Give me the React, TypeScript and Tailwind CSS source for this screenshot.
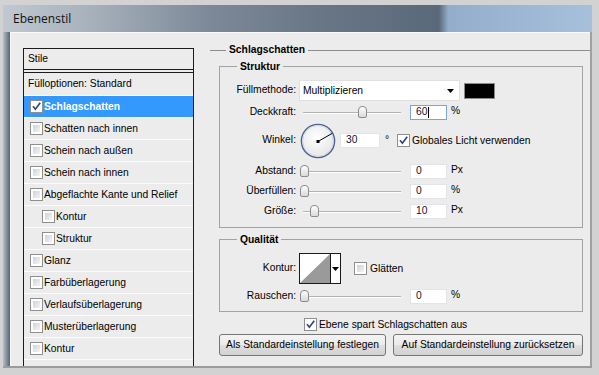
import React from "react";

const FONT = "font-['Liberation_Sans',Arial,sans-serif]";

function Check({ checked = false }: { checked?: boolean }) {
  if (checked) {
    return (
      <div className="w-[13px] h-[13px] shrink-0 border border-[#8e8f8f] bg-white flex items-center justify-center">
        <svg width="11" height="11" viewBox="0 0 11 11" className="block">
          <path d="M2 5.2 L4.4 8.2 L9.2 1.8" stroke="#33447e" strokeWidth="1.7" fill="none" />
        </svg>
      </div>
    );
  }
  return (
    <div className="w-[13px] h-[13px] shrink-0 border border-[#8e8f8f] bg-white p-[2px]">
      <div className="w-full h-full bg-[linear-gradient(135deg,#cfd2d7,#f3f4f5)]" />
    </div>
  );
}

function Slider({ thumb }: { thumb: string }) {
  return (
    <div className="relative w-[101px] h-[15px] shrink-0">
      <div className="absolute left-[3px] right-0 top-[7px] h-[2px] border-t border-[#b3b3b3] bg-white" />
      <div className={`absolute top-[1px] w-[9px] h-[12px] rounded-t-[4px] rounded-b-[2px] border border-[#8c8c8c] bg-[linear-gradient(#ffffff,#d9d9d9)] ${thumb}`} />
    </div>
  );
}

function NumInput({ value, focus = false, w = "w-[37px]" }: { value: string; focus?: boolean; w?: string }) {
  return (
    <div
      className={`${w} h-[15px] shrink-0 bg-white border ${
        focus ? "border-[#7aa7d8]" : "border-[#e3e4e8]"
      } flex items-center pl-[5px] text-[#14142e] leading-none`}
    >
      {value}
      {focus && <span className="w-px h-[11px] bg-black ml-[1px]" />}
    </div>
  );
}

function Label({ children }: { children: React.ReactNode }) {
  return <div className="w-[76px] shrink-0 text-right leading-none">{children}</div>;
}

function SliderRow({
  label,
  thumb,
  value,
  unit,
  mt,
  focus = false,
}: {
  label: string;
  thumb: string;
  value: string;
  unit: string;
  mt: string;
  focus?: boolean;
}) {
  return (
    <div className={`flex items-center h-[15px] ${mt}`}>
      <Label>{label}</Label>
      <div className="ml-[4px]">
        <Slider thumb={thumb} />
      </div>
      <div className="ml-[9px]">
        <NumInput value={value} focus={focus} />
      </div>
      <div className="ml-[4px] self-start mt-[1px] leading-none">{unit}</div>
    </div>
  );
}

function ListRow({
  text,
  box = true,
  indent = false,
  selected = false,
  first = false,
}: {
  text: string;
  box?: boolean;
  indent?: boolean;
  selected?: boolean;
  first?: boolean;
}) {
  return (
    <div className={`h-[22px] shrink-0 flex flex-col ${first ? "" : "border-t border-[#fbfbfb]"}`}>
      <div
        className={`flex-1 flex items-center ${selected ? "bg-[#3399ff] text-white font-bold" : ""} ${
          box ? (indent ? "pl-[18px]" : "pl-[6px]") : "pl-[4px]"
        }`}
      >
        {box && <Check checked={selected} />}
        <span className={box ? "ml-[1px]" : ""}>{text}</span>
      </div>
    </div>
  );
}

function Dial() {
  return (
    <svg width="36" height="36" viewBox="0 0 36 36" className="block shrink-0">
      <defs>
        <radialGradient id="dialg" cx="45%" cy="40%" r="65%">
          <stop offset="0%" stopColor="#ffffff" />
          <stop offset="100%" stopColor="#e4e4e4" />
        </radialGradient>
      </defs>
      <circle cx="18" cy="18" r="16.6" fill="url(#dialg)" stroke="#4f6190" strokeWidth="1.4" />
      <circle cx="18" cy="18" r="15.4" fill="none" stroke="#c9d0de" strokeWidth="0.8" />
      <line x1="18" y1="18.5" x2="32.3" y2="10.3" stroke="#000" strokeWidth="1" />
      <rect x="16.5" y="17" width="3" height="3" fill="#000" />
    </svg>
  );
}

function ContourPreview() {
  return (
    <div className="flex h-[31px] shrink-0 border border-[#1a1a1a] bg-white">
      <svg width="30" height="29" viewBox="0 0 30 29" className="block">
        <rect width="30" height="29" fill="#ffffff" />
        <polygon points="0,29 30,0 30,29" fill="#9a9a9a" />
      </svg>
      <div className="w-[10px] border-l border-[#1a1a1a] flex items-center justify-center">
        <svg width="7" height="4" viewBox="0 0 7 4" className="block">
          <polygon points="0,0 7,0 3.5,4" fill="#000" />
        </svg>
      </div>
    </div>
  );
}

function Button({ children, w }: { children: React.ReactNode; w: string }) {
  return (
    <div
      className={`${w} h-[22px] shrink-0 rounded-[3px] border border-[#767676] bg-[linear-gradient(#f4f4f4_0%,#ebebeb_48%,#dedede_52%,#d2d2d2_100%)] flex items-center justify-center leading-none`}
    >
      {children}
    </div>
  );
}

export default function App() {
  return (
    <div className={`w-[599px] h-[375px] bg-[#d2d2d2] pt-[5px] pl-[3px] overflow-hidden text-[10.3px] text-black ${FONT}`}>
      <div className="w-[589px] h-[363px] flex flex-col bg-[#9c9c9c]">
        <div className="h-[27px] shrink-0 flex items-center pl-[10px] bg-[linear-gradient(90deg,#c0c8d1_0%,#a7b1bc_15%,#7d8998_35%,#687585_55%,#5a697a_74%,#94adca_75.6%,#9fb8d5_90%,#a6bfdb_100%)]">
          <span className="font-['Open_Sans',sans-serif] text-[12px] text-[#111]">Ebenenstil</span>
        </div>
        <div className="flex-1 flex min-h-0 pb-[2px]">
          <div className="w-[7px] shrink-0 bg-[linear-gradient(90deg,#b7c0ca,#556477)]" />
          <div className="flex-1 min-w-0 bg-[#ececec] border-l border-t border-[#fafafa] flex items-start pt-[11px] pl-[12px] overflow-hidden">
            {/* left list */}
            <div className="w-[171px] mt-[4px] h-[330px] shrink-0 border border-[#1c1c1c] border-b-0 flex flex-col bg-[#ececec]">
              <div className="h-[20px] shrink-0 flex items-center pl-[4px]">Stile</div>
              <div className="h-px shrink-0 bg-[#1c1c1c]" />
              <div className="h-[2px] shrink-0" />
              <div className="h-px shrink-0 bg-[#1c1c1c]" />
              <ListRow text="Fülloptionen: Standard" box={false} first />
              <ListRow text="Schlagschatten" selected />
              <ListRow text="Schatten nach innen" />
              <ListRow text="Schein nach außen" />
              <ListRow text="Schein nach innen" />
              <ListRow text="Abgeflachte Kante und Relief" />
              <ListRow text="Kontur" indent />
              <ListRow text="Struktur" indent />
              <ListRow text="Glanz" />
              <ListRow text="Farbüberlagerung" />
              <ListRow text="Verlaufsüberlagerung" />
              <ListRow text="Musterüberlagerung" />
              <ListRow text="Kontur" />
              <ListRow text="" box={false} />
            </div>

            {/* right panel */}
            <div className="ml-[16px] w-[380px] shrink-0 flex flex-col">
              <div className="h-[13px] flex items-center">
                <div className="w-[16px] h-px bg-[#8d8d8d]" />
                <div className="px-[3px] font-bold leading-none">Schlagschatten</div>
                <div className="flex-1 h-px bg-[#8d8d8d]" />
              </div>

              <fieldset className="ml-[9px] mt-[3px] w-[364px] border border-[#a3a3a3] pb-[8px]">
                <legend className="ml-[17px] px-[3px] font-bold leading-[13px]">Struktur</legend>
                <div className="flex items-center h-[21px] mt-[7px]">
                  <Label>Füllmethode:</Label>
                  <div className="ml-[3px] w-[161px] h-[21px] bg-white border border-[#e0e0e0] flex items-center justify-between pl-[3px] pr-[5px]">
                    <span>Multiplizieren</span>
                    <svg width="7" height="4" viewBox="0 0 7 4" className="block">
                      <polygon points="0,0 7,0 3.5,4" fill="#000" />
                    </svg>
                  </div>
                  <div className="ml-[4px] w-[31px] h-[16px] bg-black border border-[#8a8a8a]" />
                </div>
                <SliderRow label="Deckkraft:" thumb="left-[58px]" value="60" unit="%" mt="mt-[4px]" focus />
                <div className="flex items-center h-[35px] mt-[3px]">
                  <Label>Winkel:</Label>
                  <div className="ml-[4px]">
                    <Dial />
                  </div>
                  <div className="ml-[4px]">
                    <NumInput value="30" w="w-[40px]" />
                  </div>
                  <div className="ml-[5px] w-[12px] self-start mt-[12px] leading-none">°</div>
                  <Check checked />
                  <span className="ml-[2px]">Globales Licht verwenden</span>
                </div>
                <SliderRow label="Abstand:" thumb="left-0" value="0" unit="Px" mt="mt-[6px]" />
                <SliderRow label="Überfüllen:" thumb="left-0" value="0" unit="%" mt="mt-[5px]" />
                <SliderRow label="Größe:" thumb="left-[10px]" value="10" unit="Px" mt="mt-[5px]" />
              </fieldset>

              <fieldset className="ml-[9px] mt-[5px] w-[364px] border border-[#a3a3a3] pb-[7px]">
                <legend className="ml-[17px] px-[3px] font-bold leading-[13px]">Qualität</legend>
                <div className="flex items-center h-[31px] mt-[7px]">
                  <Label>Kontur:</Label>
                  <div className="ml-[3px]">
                    <ContourPreview />
                  </div>
                  <div className="ml-[13px]">
                    <Check />
                  </div>
                  <span className="ml-[3px]">Glätten</span>
                </div>
                <SliderRow label="Rauschen:" thumb="left-0" value="0" unit="%" mt="mt-[5px]" />
              </fieldset>

              <div className="flex items-center h-[13px] mt-[6px] ml-[94px]">
                <Check checked />
                <span className="ml-[2px]">Ebene spart Schlagschatten aus</span>
              </div>

              <div className="flex mt-[3px] ml-[9px]">
                <Button w="w-[167px]">Als Standardeinstellung festlegen</Button>
                <div className="ml-[7px]">
                  <Button w="w-[190px]">Auf Standardeinstellung zurücksetzen</Button>
                </div>
              </div>
            </div>
          </div>
          <div className="w-[2px] shrink-0 bg-[#a0a0a0]" />
        </div>
      </div>
    </div>
  );
}
